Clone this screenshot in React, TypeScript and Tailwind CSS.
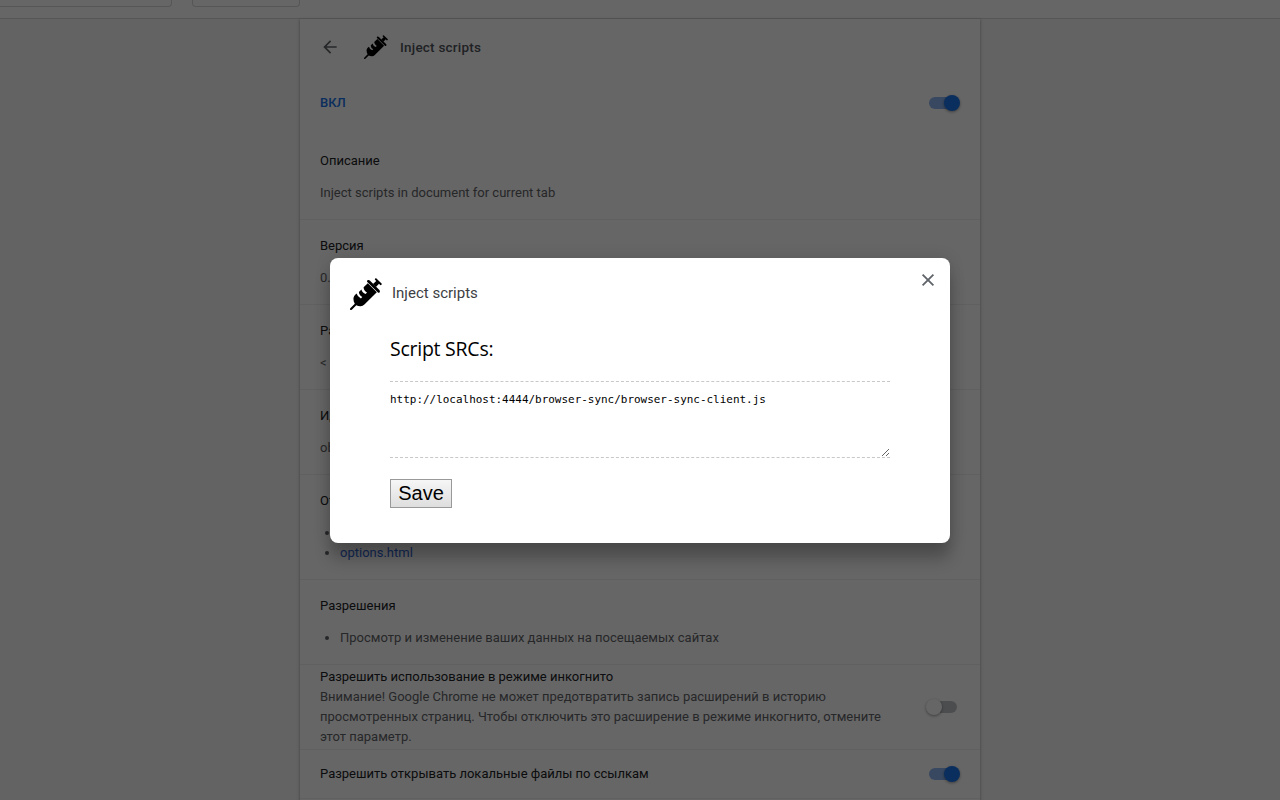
import React from "react";

function SyringeIcon({ className }: { className: string }) {
  return (
    <svg viewBox="0 0 32 32" className={className} fill="currentColor">
      <path d="M.3 30.3 4.8 25.8C3.6 23.8 3.2 21.6 3.6 19.4Q4 17.9 5.2 16.8L6.6 15.6Q7.4 18.8 10.9 20.4L12.3 19Q9 17 8.9 13.9L11.4 11.4Q12.2 14.8 15.6 15.9L17 14.5Q13.7 12.8 13.6 9.3L17.8 5.2 26.8 14.2 14.4 26.6Q12.8 28.2 10.6 28.3 8.2 28.4 6.3 27.3L1.8 31.8Q.8 32.3.2 31.8-.3 31.2.3 30.3Z" />
      <path d="M17 3.7Q16.9 2.5 18 2.1 19 1.8 19.8 2.5L29.4 12.1Q30.2 13 29.8 13.9 29.2 15 28.2 14.7Z" />
      <path d="M23 6.1 26.2 3 24.8 1.6Q24.7.2 26.2.2L31.8 5.8Q32 7.2 30.4 7.2L29 5.8 25.9 9Z" />
    </svg>
  );
}

function Toggle({ on }: { on?: boolean }) {
  return (
    <div className="relative mr-[3px] h-3 w-7 shrink-0">
      <div className={on ? "h-3 w-7 rounded-full bg-[#8cb4f0]" : "h-3 w-7 rounded-full bg-[#bdc1c6]"} />
      <div
        className={
          on
            ? "absolute -top-0.5 left-[15px] size-4 rounded-full bg-[#1a73e8] shadow-[0_1px_3px_rgba(0,0,0,0.4)]"
            : "absolute -top-0.5 -left-[3px] size-4 rounded-full bg-white shadow-[0_1px_3px_rgba(0,0,0,0.4)]"
        }
      />
    </div>
  );
}

function Section({ title, first, children }: { title: string; first?: boolean; children: React.ReactNode }) {
  return (
    <section className={first ? "px-5 pt-4 pb-4" : "border-t border-black/6 px-5 pt-4 pb-4"}>
      <h2 className="mb-3 text-[#202124]">{title}</h2>
      {children}
    </section>
  );
}

export default function App() {
  return (
    <div className="relative h-[800px] w-full overflow-hidden bg-[#f8f8f8] font-['Roboto',sans-serif] text-[13px] leading-5 text-[#5f6368]">
      <header className="flex h-[19px] gap-5 border-b border-[#d8d8d8] bg-white">
        <div className="h-[7px] w-[172px] rounded-br border-r border-b border-[#d8d8d8]" />
        <div className="h-[7px] w-[108px] rounded-b border-x border-b border-[#d8d8d8]" />
      </header>

      <main className="mx-auto h-[900px] w-[680px] bg-white shadow-[0_1px_2px_0_rgba(60,60,60,0.3),0_1px_3px_1px_rgba(60,60,60,0.15)]">
        <div className="flex h-14 items-center pl-[22px] text-[#5f6368]">
          <svg viewBox="0 0 24 24" className="mr-[26px] size-4 scale-125 fill-current">
            <path d="M20 11H7.83l5.59-5.59L12 4l-8 8 8 8 1.41-1.41L7.83 13H20v-2z" />
          </svg>
          <SyringeIcon className="mr-3 size-6 text-black" />
          <h1 className="pb-px text-[13.5px] font-medium tracking-[0.22px] text-[#50545a]">Inject scripts</h1>
        </div>
        <div className="flex h-14 items-center justify-between pr-5 pl-5">
          <span className="font-medium text-[#1a73e8]">ВКЛ</span>
          <Toggle on />
        </div>
        <div className="h-1" />
        <Section title="Описание" first>
          <p>Inject scripts in document for current tab</p>
        </Section>
        <Section title="Версия">
          <p>0.0.1</p>
        </Section>
        <Section title="Размер">
          <p>&lt; 1 МБ</p>
        </Section>
        <Section title="Идентификатор">
          <p>obkjbjhh</p>
        </Section>
        <Section title="Отладка">
          <ul className="list-disc pl-5">
            <li><span className="text-[#3367d6]">фон</span></li>
            <li><span className="text-[#3367d6]">options.html</span></li>
          </ul>
        </Section>
        <Section title="Разрешения">
          <ul className="list-disc pl-5">
            <li>Просмотр и изменение ваших данных на посещаемых сайтах</li>
          </ul>
        </Section>
        <section className="flex h-[85px] items-center justify-between border-t border-black/6 px-5">
          <div className="w-[566px]">
            <h2 className="text-[#202124]">Разрешить использование в режиме инкогнито</h2>
            <p>
              Внимание! Google Chrome не может предотвратить запись расширений в историю просмотренных страниц. Чтобы
              отключить это расширение в режиме инкогнито, отмените этот параметр.
            </p>
          </div>
          <Toggle />
        </section>
        <section className="flex h-[49px] items-center justify-between border-t border-black/6 px-5">
          <h2 className="text-[#202124]">Разрешить открывать локальные файлы по ссылкам</h2>
          <Toggle on />
        </section>
        <div className="border-t border-black/6" />
      </main>

      <div className="absolute inset-0 flex items-start justify-center bg-black/60 pt-[258px]">
        <div
          role="dialog"
          className="h-[285px] w-[620px] rounded-lg bg-white shadow-[0_0_16px_rgba(0,0,0,0.12),0_16px_16px_rgba(0,0,0,0.24)]"
        >
          <div className="flex h-[72px] items-start justify-between pt-5 pr-[14px] pl-5">
            <div className="flex items-center">
              <SyringeIcon className="mr-2.5 size-8 text-black" />
              <span className="pb-0.5 text-[15px] text-[#3c4043]">Inject scripts</span>
            </div>
            <svg viewBox="0 0 16 16" className="-mt-[6px] size-4 stroke-[#5f6368] stroke-[1.8]" fill="none">
              <path d="M2.6 2.6 13.4 13.4M13.4 2.6 2.6 13.4" />
            </svg>
          </div>
          <div className="px-[60px]">
            <h3 className="pt-[5px] font-['Open_Sans','Noto_Sans',sans-serif] text-[19.5px] leading-7 tracking-[-0.25px] text-black">
              Script SRCs:
            </h3>
            <textarea
              readOnly
              className="mt-[18px] block h-[77px] w-[500px] resize overflow-hidden border-y border-dashed border-[#c8c8c8] pt-[11px] pb-2.5 font-['DejaVu_Sans_Mono',monospace] text-[10.96px] leading-[14px] text-black outline-none"
              defaultValue="http://localhost:4444/browser-sync/browser-sync-client.js"
            />
            <button className="mt-[21px] h-[29px] w-[62px] border border-[#999] bg-linear-to-b from-[#f6f6f6] to-[#dedede] font-['Liberation_Sans',sans-serif] text-xl leading-[27px] text-black">
              Save
            </button>
          </div>
        </div>
      </div>
    </div>
  );
}
